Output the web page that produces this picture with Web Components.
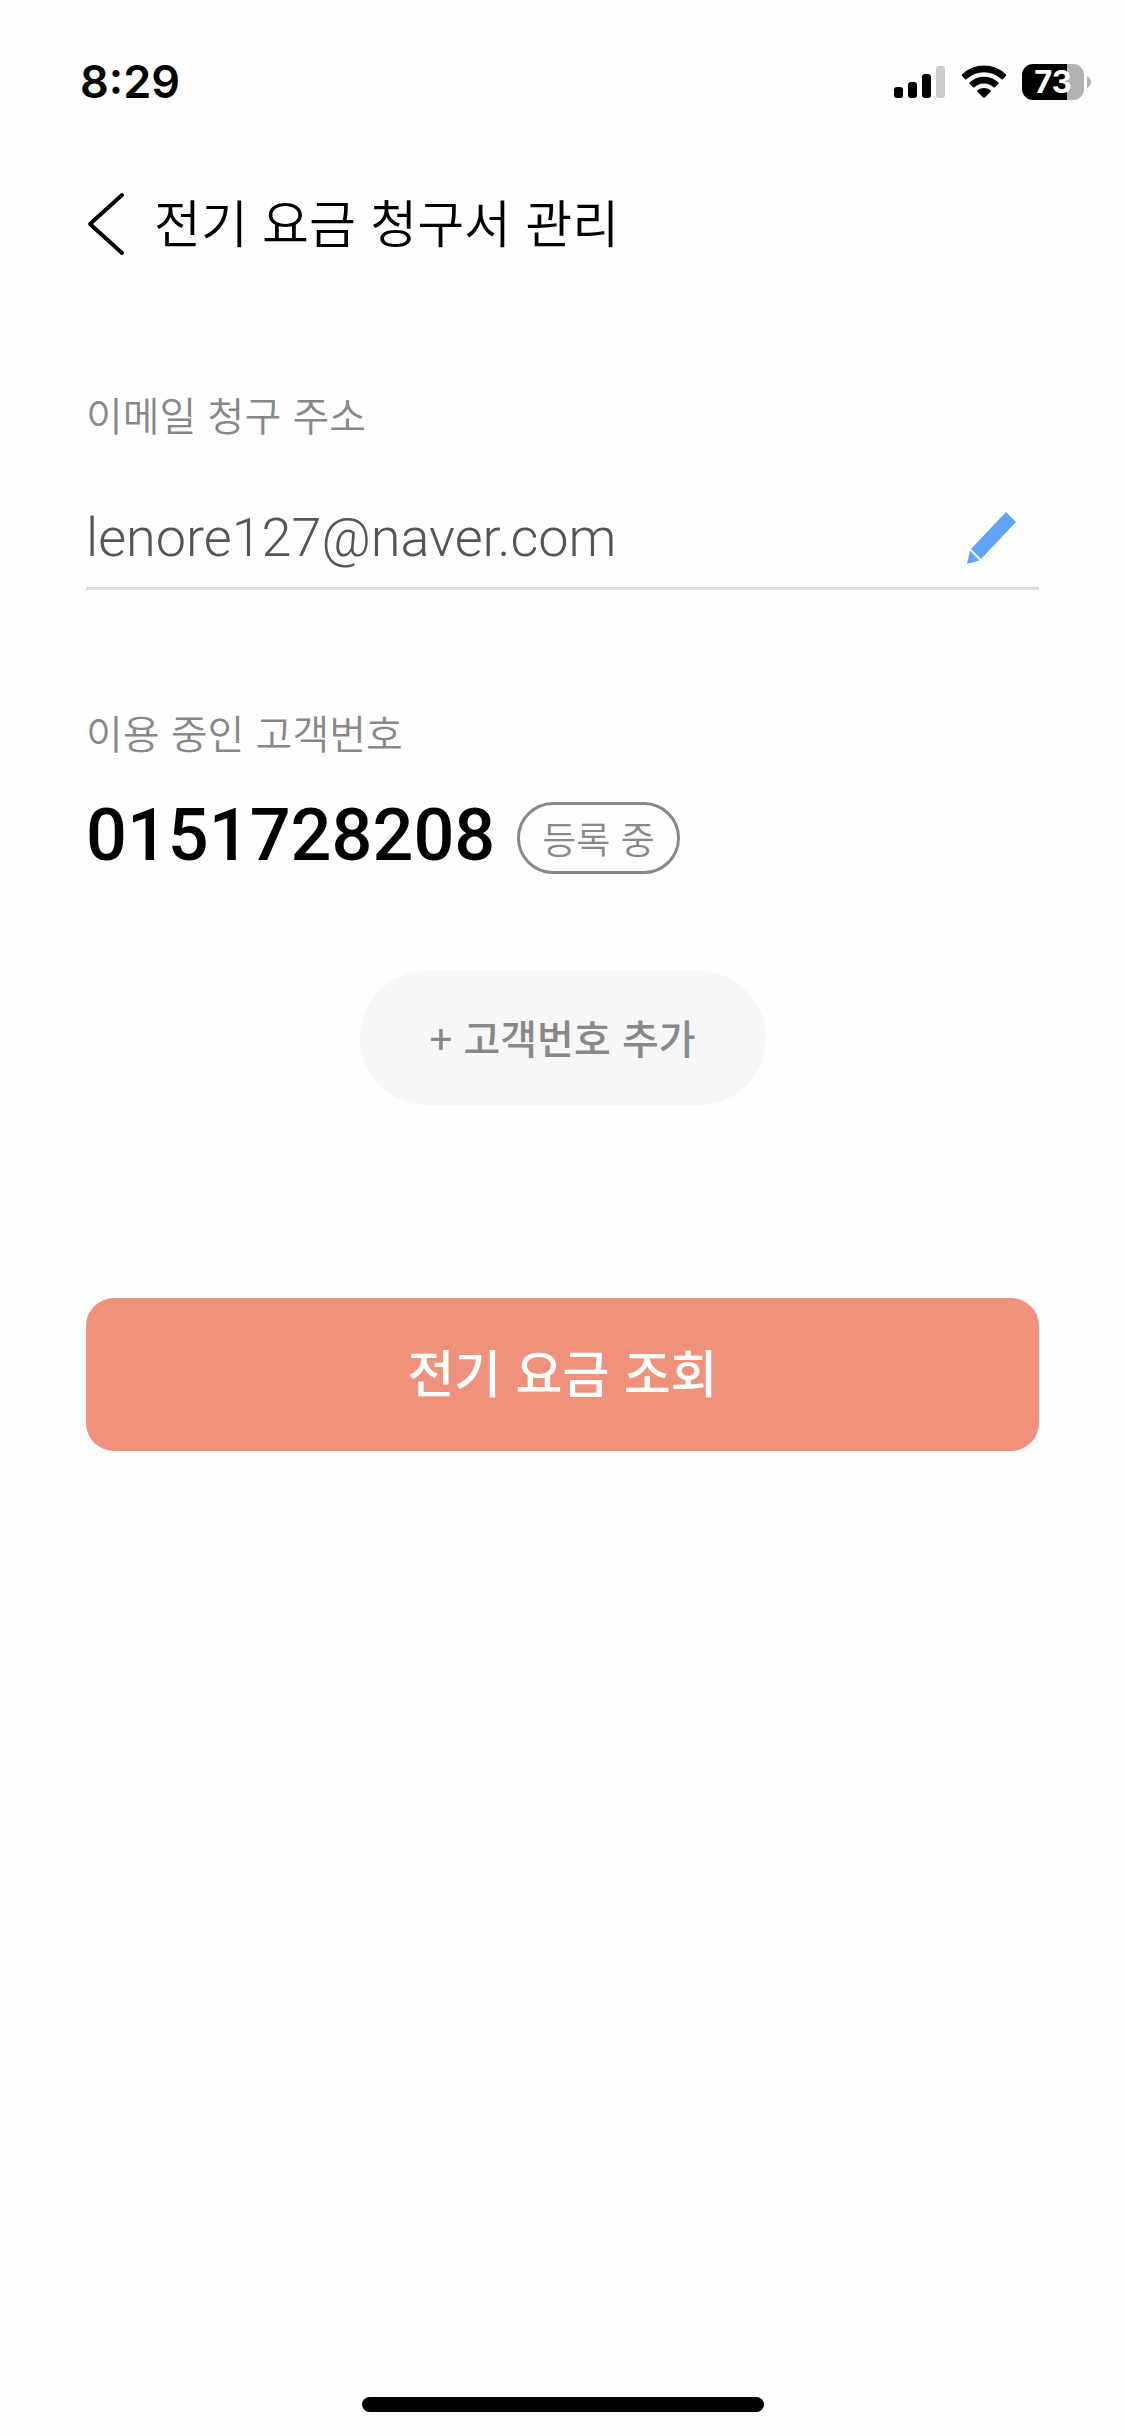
<!DOCTYPE html>
<html lang="ko">
<head>
<meta charset="UTF-8">
<meta name="viewport" content="width=device-width, initial-scale=1">
<title>전기 요금 청구서 관리</title>
<style>
  html, body { margin: 0; padding: 0; }
  body {
    background: #fefefe;
    color: #000;
    font-family: "Noto Sans CJK KR", sans-serif;
  }
</style>
</head>
<body>
<bill-app>
  <status-bar slot="status" time="8:29" battery="73"></status-bar>
  <page-header slot="header">전기 요금 청구서 관리</page-header>
  <email-field label="이메일 청구 주소" value="lenore127@naver.com"></email-field>
  <customer-number label="이용 중인 고객번호" number="0151728208">등록 중</customer-number>
  <pill-button>+ 고객번호 추가</pill-button>
  <primary-button>전기 요금 조회</primary-button>
</bill-app>

<script>
class BillApp extends HTMLElement {
  connectedCallback() {
    this.attachShadow({ mode: 'open' });
    this.shadowRoot.innerHTML = `
      <style>
        :host, * { box-sizing: border-box; }
        :host { display: flex; flex-direction: column; min-height: 100vh; }
        main { flex: 1; display: flex; flex-direction: column; padding: 72px 86px 0; }
        .home { display: flex; justify-content: center; padding: 24px 0; }
        .home span { width: 402px; height: 15px; border-radius: 8px; background: #000; }
      </style>
      <slot name="status"></slot>
      <slot name="header"></slot>
      <main><slot></slot></main>
      <div class="home"><span></span></div>
    `;
  }
}

class StatusBar extends HTMLElement {
  connectedCallback() {
    this.attachShadow({ mode: 'open' });
    this.shadowRoot.innerHTML = `
      <style>
        :host, * { box-sizing: border-box; }
        :host {
          display: flex;
          align-items: center;
          justify-content: space-between;
          height: 132px;
          padding: 32px 34px 0 80px;
          font-family: Inter, sans-serif;
        }
        time { font-size: 45px; font-weight: 600; line-height: 56px; }
        .icons { display: flex; align-items: center; gap: 15px; }
        svg { display: block; }
        .battery { display: flex; align-items: center; gap: 3px; }
        .cell {
          display: flex;
          align-items: center;
          justify-content: center;
          width: 62px;
          height: 36px;
          border-radius: 11px;
          background: linear-gradient(to right, #000 73%, #b1b1b1 73%);
          color: #fff;
          font-size: 31px;
          font-weight: 700;
          line-height: 36px;
        }
      </style>
      <time></time>
      <div class="icons">
        <svg width="52" height="34" viewBox="0 0 52 34" aria-hidden="true">
          <rect x="0" y="22" width="9" height="11" rx="3"/>
          <rect x="14" y="17" width="9" height="16" rx="3"/>
          <rect x="28" y="9" width="9" height="24" rx="3"/>
          <rect x="42" y="1" width="9" height="32" rx="3" fill="#cbcbcb"/>
        </svg>
        <svg width="46" height="34" viewBox="0 0 46 34" aria-hidden="true">
          <path d="M1.1 9.4 A31.5 31.5 0 0 1 44.9 9.4 Q45.6 10.2 44.9 11 L41.9 14.2 Q41.1 14.8 40.3 14.1 A25 25 0 0 0 5.7 14.1 Q4.9 14.8 4.1 14.2 L1.1 11 Q.4 10.2 1.1 9.4 Z"/>
          <path d="M8.6 17.4 A21 21 0 0 1 37.4 17.4 Q38 18.2 37.3 19 L34 22.2 Q33.2 22.8 32.4 22.2 A14 14 0 0 0 13.6 22.2 Q12.8 22.8 12 22.2 L8.7 19 Q8 18.2 8.6 17.4 Z"/>
          <path d="M16.5 25.3 A10.4 10.4 0 0 1 29.5 25.3 Q30.2 26.1 29.5 26.9 L23.8 32.6 Q23 33.3 22.2 32.6 L16.5 26.9 Q15.8 26.1 16.5 25.3 Z"/>
        </svg>
        <div class="battery">
          <span class="cell"></span>
          <svg width="4" height="12" viewBox="0 0 4 12" aria-hidden="true">
            <path d="M0 0 Q4 2 4 6 Q4 10 0 12 Z" fill="#b1b1b1"/>
          </svg>
        </div>
      </div>
    `;
    this.shadowRoot.querySelector('time').textContent = this.getAttribute('time');
    this.shadowRoot.querySelector('.cell').textContent = this.getAttribute('battery');
  }
}

class PageHeader extends HTMLElement {
  connectedCallback() {
    this.attachShadow({ mode: 'open' });
    this.shadowRoot.innerHTML = `
      <style>
        * { margin: 0; padding: 0; }
        :host, * { box-sizing: border-box; }
        :host { display: flex; align-items: center; gap: 28px; height: 180px; padding: 4px 86px 0; }
        button { border: 0; background: none; cursor: pointer; }
        svg { display: block; }
        h1 { padding-bottom: 6px; font-size: 51px; font-weight: 350; line-height: 76px; }
      </style>
      <button type="button" aria-label="뒤로">
        <svg width="40" height="64" viewBox="0 0 40 64" fill="none" stroke="#000" stroke-width="4" stroke-linecap="round" stroke-linejoin="round">
          <path d="M36 3 L4 32 L36 61"/>
        </svg>
      </button>
      <h1><slot></slot></h1>
    `;
  }
}

class EmailField extends HTMLElement {
  connectedCallback() {
    this.attachShadow({ mode: 'open' });
    this.shadowRoot.innerHTML = `
      <style>
        * { margin: 0; padding: 0; }
        :host, * { box-sizing: border-box; }
        :host { display: flex; flex-direction: column; gap: 40px; }
        label { color: #888; font-size: 40px; font-weight: 350; line-height: 60px; }
        .row {
          display: flex;
          align-items: center;
          height: 106px;
          padding: 4px 20px 0 0;
          border-bottom: 3px solid #dcdcdc;
        }
        input {
          flex: 1;
          min-width: 0;
          border: 0;
          outline: 0;
          background: none;
          color: #555;
          font: 300 54px/76px Roboto, "Noto Sans CJK KR", sans-serif;
        }
        button { border: 0; background: none; cursor: pointer; }
        svg { display: block; }
      </style>
      <label for="email"></label>
      <div class="row">
        <input id="email" type="email">
        <button type="button" aria-label="이메일 수정">
          <svg width="52" height="52" viewBox="0 0 52 52" fill="#5fa4f9">
            <path d="M39 0 L49 10 L14 47 L4 37 Z"/>
            <path d="M3 38.5 L12.5 48.5 L0 52 Z"/>
          </svg>
        </button>
      </div>
    `;
    this.shadowRoot.querySelector('label').textContent = this.getAttribute('label');
    this.shadowRoot.querySelector('input').value = this.getAttribute('value');
  }
}

class CustomerNumber extends HTMLElement {
  connectedCallback() {
    this.attachShadow({ mode: 'open' });
    this.shadowRoot.innerHTML = `
      <style>
        * { margin: 0; padding: 0; }
        :host, * { box-sizing: border-box; }
        :host { display: flex; flex-direction: column; gap: 40px; margin-top: 112px; }
        h2 { color: #888; font-size: 40px; font-weight: 350; line-height: 60px; }
        .row { display: flex; align-items: center; gap: 22px; }
        strong { padding-bottom: 4px; font: 500 72px/68px Roboto, "Noto Sans CJK KR", sans-serif; }
        .badge {
          padding: 0 22px;
          border: 3px solid #888;
          border-radius: 36px;
          color: #888;
          font-size: 37px;
          font-weight: 350;
          line-height: 66px;
        }
      </style>
      <h2></h2>
      <div class="row">
        <strong></strong>
        <span class="badge"><slot></slot></span>
      </div>
    `;
    this.shadowRoot.querySelector('h2').textContent = this.getAttribute('label');
    this.shadowRoot.querySelector('strong').textContent = this.getAttribute('number');
  }
}

class PillButton extends HTMLElement {
  connectedCallback() {
    this.attachShadow({ mode: 'open' });
    this.shadowRoot.innerHTML = `
      <style>
        :host { display: block; align-self: center; margin-top: 97px; }
        button {
          display: block;
          padding: 36px 70px 38px;
          border: 0;
          border-radius: 67px;
          background: #f7f7f7;
          color: #888;
          font: 500 40px/60px "Noto Sans CJK KR", sans-serif;
          cursor: pointer;
        }
      </style>
      <button type="button"><slot></slot></button>
    `;
  }
}

class PrimaryButton extends HTMLElement {
  connectedCallback() {
    this.attachShadow({ mode: 'open' });
    this.shadowRoot.innerHTML = `
      <style>
        :host { display: block; margin-top: 193px; }
        button {
          display: block;
          width: 100%;
          height: 153px;
          padding: 0 0 8px;
          border: 0;
          border-radius: 28px;
          background: #f0917b;
          color: #fff;
          font: 500 51px/76px "Noto Sans CJK KR", sans-serif;
          cursor: pointer;
        }
      </style>
      <button type="button"><slot></slot></button>
    `;
  }
}

customElements.define('bill-app', BillApp);
customElements.define('status-bar', StatusBar);
customElements.define('page-header', PageHeader);
customElements.define('email-field', EmailField);
customElements.define('customer-number', CustomerNumber);
customElements.define('pill-button', PillButton);
customElements.define('primary-button', PrimaryButton);
</script>
</body>
</html>
